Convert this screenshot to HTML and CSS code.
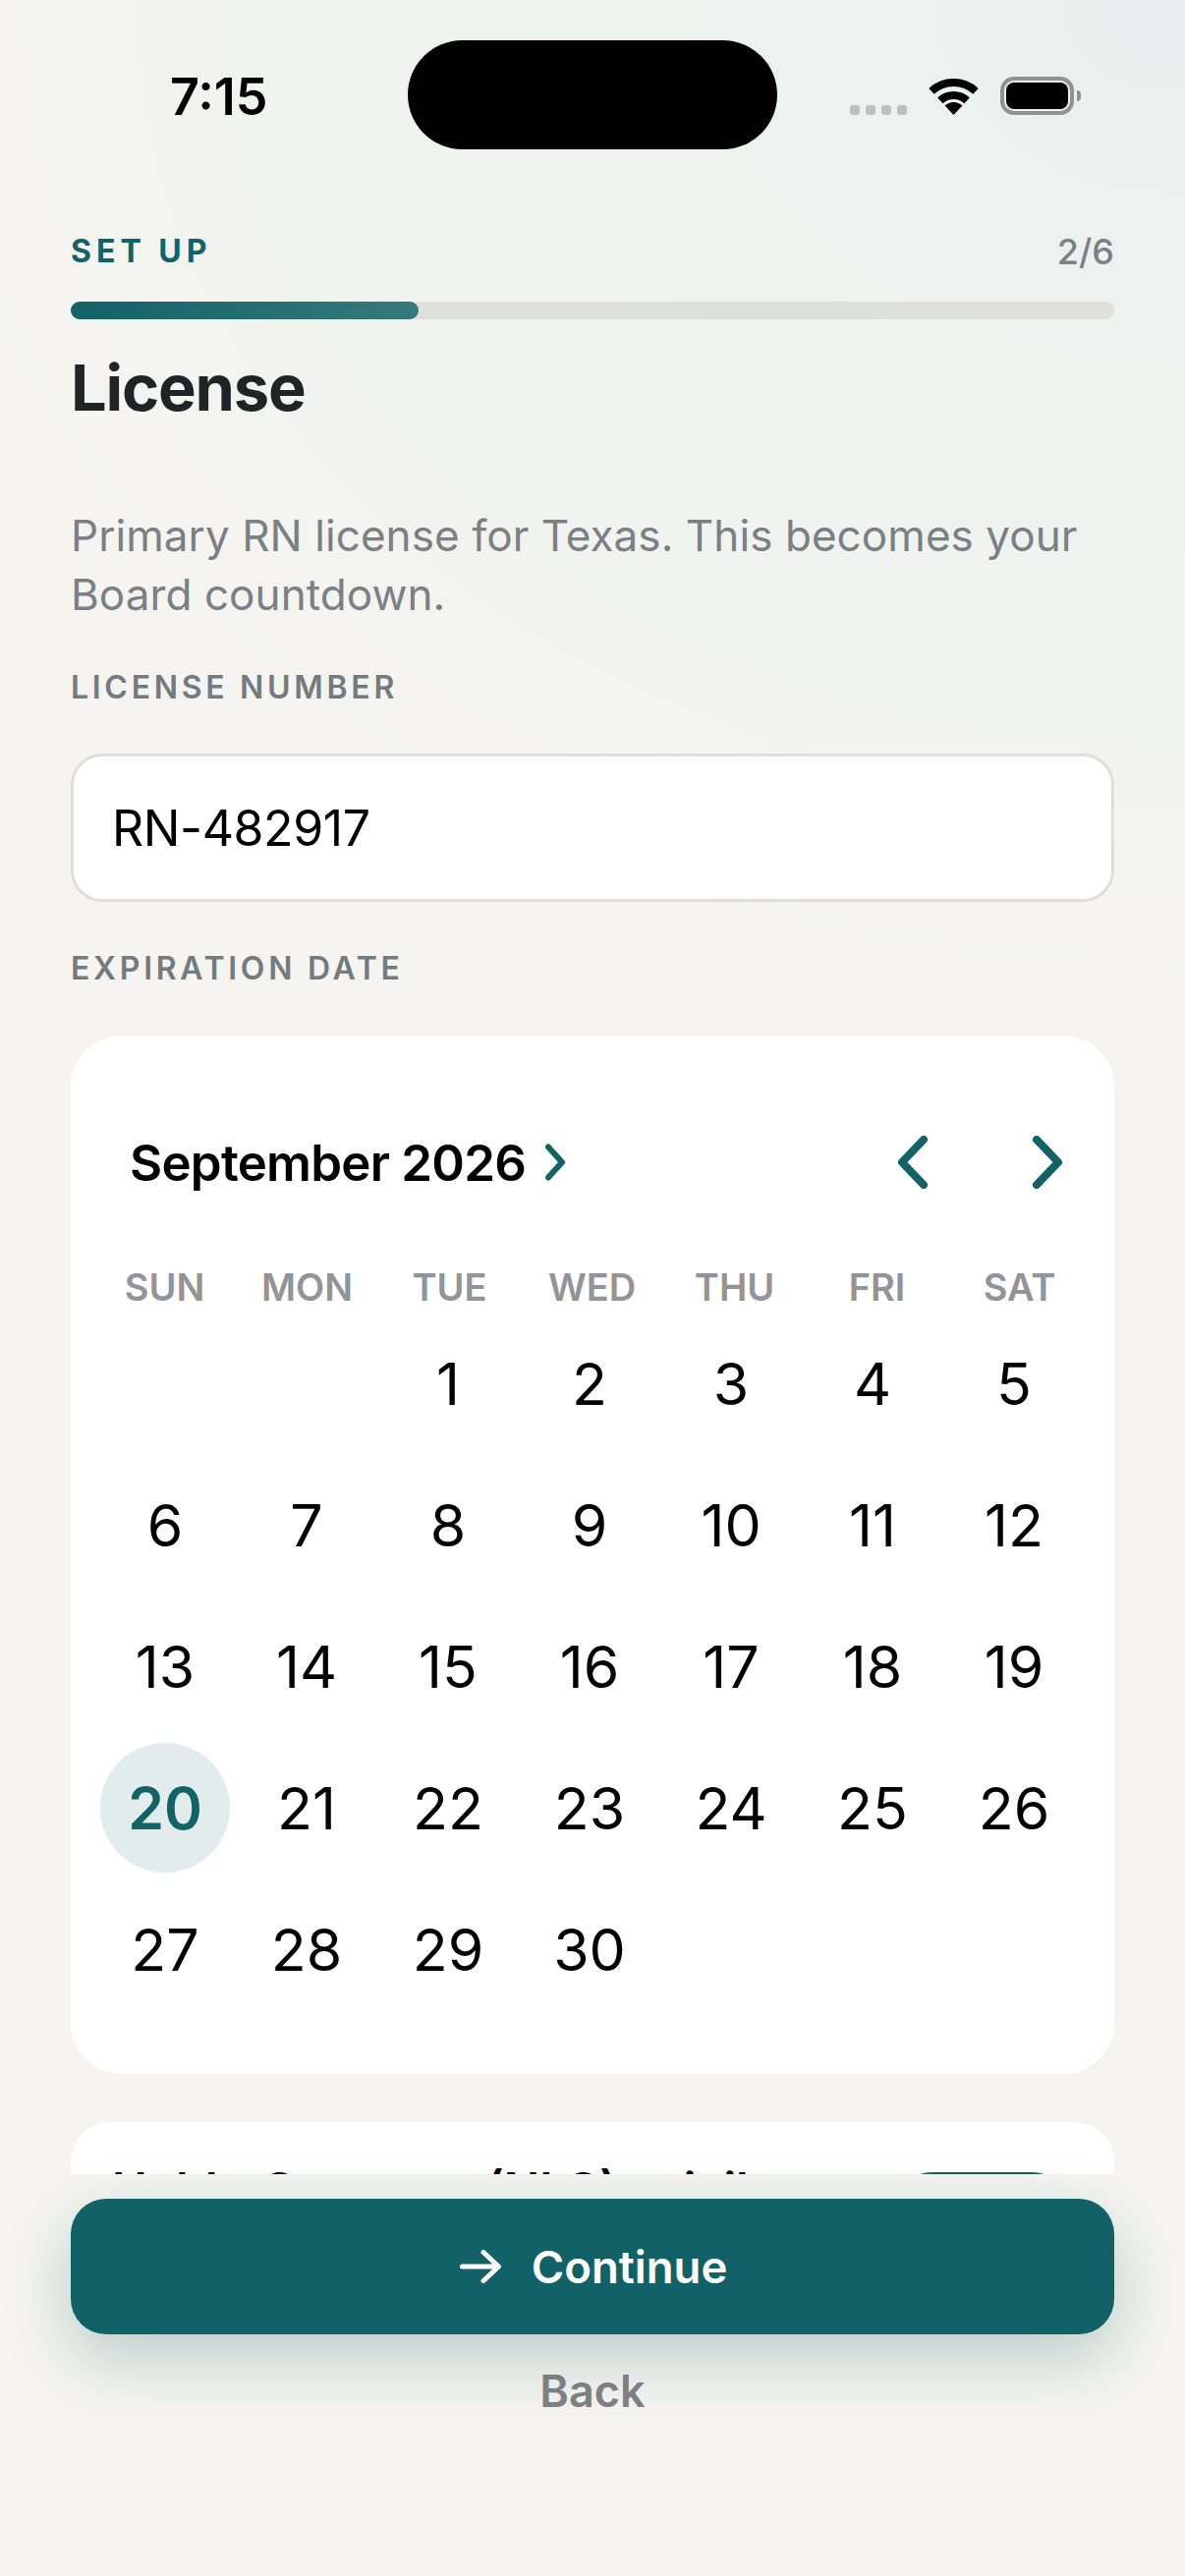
FILE: index.html
```html
<!DOCTYPE html>
<html lang="en">
<head>
    <meta charset="UTF-8">
    <meta name="viewport" content="width=device-width, initial-scale=1.0">
    <title>License</title>
    <link rel="stylesheet" href="styles.css">
</head>
<body>

<div class="status-bar">
    <span class="status-time">7:15</span>
    <div class="island"></div>
    <div class="status-icons">
        <div class="signal"><i></i><i></i><i></i><i></i></div>
        <svg class="wifi" width="51" height="37" viewBox="0 0 51 37">
            <path d="M3 12.9A33 33 0 0 1 48 12.9" fill="none" stroke="#000" stroke-width="8"/>
            <path d="M11.9 22.4A20 20 0 0 1 39.1 22.4" fill="none" stroke="#000" stroke-width="8"/>
            <path d="M25.5 37L16.6 27.5A13 13 0 0 1 34.4 27.5Z" fill="#000"/>
        </svg>
        <div class="battery"><div class="battery-level"></div></div>
        <div class="battery-nub"></div>
    </div>
</div>

<main class="content">
    <div class="progress-head">
        <span class="step-name">SET UP</span>
        <span class="step-count">2/6</span>
    </div>
    <div class="progress-track"><div class="progress-fill"></div></div>

    <h1 class="title">License</h1>
    <p class="intro">Primary RN license for Texas. This becomes your Board countdown.</p>

    <div class="field-label label-number">LICENSE NUMBER</div>
    <div class="text-input">RN-482917</div>

    <div class="field-label label-date">EXPIRATION DATE</div>
    <section class="calendar">
        <div class="cal-head">
            <span class="cal-month">September 2026</span>
            <svg class="cal-more" width="22" height="38" viewBox="0 0 22 38">
                <path d="M4 3.5L18 19L4 34.5" fill="none" stroke="#136266" stroke-width="6" stroke-linecap="round" stroke-linejoin="round"/>
            </svg>
            <div class="cal-nav">
                <svg width="32" height="54" viewBox="0 0 32 54">
                    <path d="M27 4L5 27L27 50" fill="none" stroke="#136266" stroke-width="8" stroke-linecap="round" stroke-linejoin="round"/>
                </svg>
                <svg width="32" height="54" viewBox="0 0 32 54">
                    <path d="M5 4L27 27L5 50" fill="none" stroke="#136266" stroke-width="8" stroke-linecap="round" stroke-linejoin="round"/>
                </svg>
            </div>
        </div>
        <div class="cal-weekdays">
            <span>SUN</span><span>MON</span><span>TUE</span><span>WED</span><span>THU</span><span>FRI</span><span>SAT</span>
        </div>
        <div class="cal-days">
            <span></span><span></span><span>1</span><span>2</span><span>3</span><span>4</span><span>5</span>
            <span>6</span><span>7</span><span>8</span><span>9</span><span>10</span><span>11</span><span>12</span>
            <span>13</span><span>14</span><span>15</span><span>16</span><span>17</span><span>18</span><span>19</span>
            <span class="day-selected"><b>20</b></span><span>21</span><span>22</span><span>23</span><span>24</span><span>25</span><span>26</span>
            <span>27</span><span>28</span><span>29</span><span>30</span>
        </div>
    </section>

    <section class="option-card">
        <span class="option-text">Holds Compact (NLC) privilege</span>
        <div class="switch"></div>
    </section>
</main>

<footer class="actions">
    <button class="btn-continue">
        <svg width="42" height="34" viewBox="0 0 42 34">
            <path d="M2.5 17H39M24 2.5L39.5 17L24 31.5" fill="none" stroke="#fff" stroke-width="5" stroke-linecap="round" stroke-linejoin="round"/>
        </svg>
        Continue
    </button>
    <button class="btn-back">Back</button>
</footer>

</body>
</html>
```

FILE: styles.css
```css
html, body {
    margin: 0;
    padding: 0;
}

body {
    width: 1206px;
    height: 2622px;
    overflow: hidden;
    display: flex;
    flex-direction: column;
    font-family: 'Inter', 'Liberation Sans', sans-serif;
    color: #000;
    background-color: #f5f4f0;
    background-image: radial-gradient(ellipse 1300px 1000px at 100% 0, #e8f1ef 0%, rgba(232, 241, 239, 0.55) 45%, rgba(245, 244, 240, 0) 100%);
    background-repeat: no-repeat;
}

/* status bar */
.status-bar {
    display: flex;
    flex: none;
    height: 111px;
    margin-top: 41px;
    padding-left: 173px;
}

.status-time {
    width: 242px;
    font-size: 52px;
    font-weight: 600;
    line-height: 115px;
}

.island {
    width: 376px;
    height: 111px;
    border-radius: 56px;
    background: #000;
}

.status-icons {
    display: flex;
    align-items: flex-end;
    height: 76px;
    margin-left: 74px;
}

.signal {
    display: flex;
    gap: 6px;
}

.signal i {
    width: 10px;
    height: 10px;
    border-radius: 3px;
    background: #c0c2c1;
}

.wifi {
    margin-left: 22px;
}

.battery {
    box-sizing: border-box;
    width: 75px;
    height: 39px;
    margin-left: 22px;
    padding: 2px;
    border: 4px solid #8f9392;
    border-radius: 14px;
}

.battery-level {
    height: 100%;
    border-radius: 8px;
    background: #000;
}

.battery-nub {
    width: 4px;
    height: 11px;
    margin: 0 0 14px 3px;
    border-radius: 0 6px 6px 0;
    background: #8f9392;
}

/* scroll area */
.content {
    flex: 1;
    min-height: 0;
    overflow: hidden;
    padding: 0 72px;
}

.progress-head {
    display: flex;
    justify-content: space-between;
    margin-top: 84px;
    line-height: 40px;
}

.step-name {
    font-size: 32px;
    font-weight: 700;
    letter-spacing: 5px;
    color: #136266;
}

.step-count {
    font-size: 36px;
    font-weight: 500;
    color: #7c8083;
}

.progress-track {
    height: 18px;
    margin-top: 31px;
    border-radius: 9px;
    background: #dfdfdb;
}

.progress-fill {
    width: 354px;
    height: 100%;
    border-radius: 9px;
    background: linear-gradient(90deg, #136266, #35797c);
}

.title {
    margin: 30px 0 0;
    font-size: 65px;
    font-weight: 700;
    letter-spacing: -1.2px;
    line-height: 80px;
    color: #1f2527;
}

.intro {
    margin: 80px 0 0;
    font-size: 44px;
    letter-spacing: 0.07px;
    line-height: 60px;
    color: #7a8083;
}

.field-label {
    font-size: 32px;
    font-weight: 600;
    letter-spacing: 3.7px;
    line-height: 40px;
    color: #737b7f;
}

.label-number {
    margin-top: 45px;
}

.label-date {
    margin-top: 48px;
}

.text-input {
    box-sizing: border-box;
    height: 151px;
    margin-top: 47px;
    padding-left: 39px;
    border: 3px solid #dfdedb;
    border-radius: 32px;
    background: #fff;
    font-size: 50px;
    letter-spacing: -0.4px;
    line-height: 147px;
}

.calendar {
    margin-top: 48px;
    padding: 79px 24px 55px 23px;
    border-radius: 52px;
    background: #fff;
}

.cal-head {
    display: flex;
    align-items: center;
    height: 100px;
    padding-left: 37px;
}

.cal-month {
    font-size: 51px;
    font-weight: 600;
    letter-spacing: -0.75px;
}

.cal-more {
    margin-left: 19px;
}

.cal-nav {
    display: flex;
    gap: 105px;
    margin-left: auto;
    margin-right: 28px;
}

.cal-weekdays,
.cal-days {
    display: grid;
}

.cal-weekdays {
    grid-template-columns: repeat(7, 145px);
    margin-top: 57px;
    font-size: 38px;
    font-weight: 600;
    line-height: 40px;
    text-align: center;
    color: #939398;
}

.cal-days {
    grid-template-columns: repeat(7, 144px);
    grid-auto-rows: 144px;
    margin-top: 6px;
    margin-left: 1px;
    font-size: 59px;
}

.cal-days span {
    display: flex;
    align-items: center;
    justify-content: center;
}

.day-selected b {
    display: flex;
    align-items: center;
    justify-content: center;
    width: 132px;
    height: 132px;
    border-radius: 50%;
    background: #e3ecec;
    font-weight: 600;
    color: #136266;
}

.option-card {
    display: flex;
    justify-content: space-between;
    margin-top: 49px;
    padding: 41px 42px;
    border-radius: 40px;
    background: #fff;
}

.option-text {
    font-size: 48px;
    font-weight: 600;
    line-height: 56px;
    word-spacing: 6px;
}

.switch {
    width: 185px;
    height: 84px;
    margin-top: 10px;
    border-radius: 42px;
    background: #136266;
}

/* bottom buttons */
.actions {
    flex: none;
    position: relative;
    height: 409px;
    padding: 25px 72px 0;
    box-sizing: border-box;
}

.btn-continue {
    display: flex;
    align-items: center;
    justify-content: center;
    gap: 31px;
    width: 100%;
    height: 138px;
    padding-left: 8px;
    border: none;
    border-radius: 36px;
    background: #126166;
    box-shadow: 0 24px 64px rgba(18, 97, 102, 0.26);
    font-family: inherit;
    font-size: 45.5px;
    font-weight: 600;
    color: #fff;
}

.btn-back {
    display: block;
    width: 100%;
    height: 60px;
    margin-top: 27px;
    padding: 0;
    border: none;
    background: none;
    font-family: inherit;
    font-size: 45px;
    font-weight: 600;
    color: #7c8083;
}
```
